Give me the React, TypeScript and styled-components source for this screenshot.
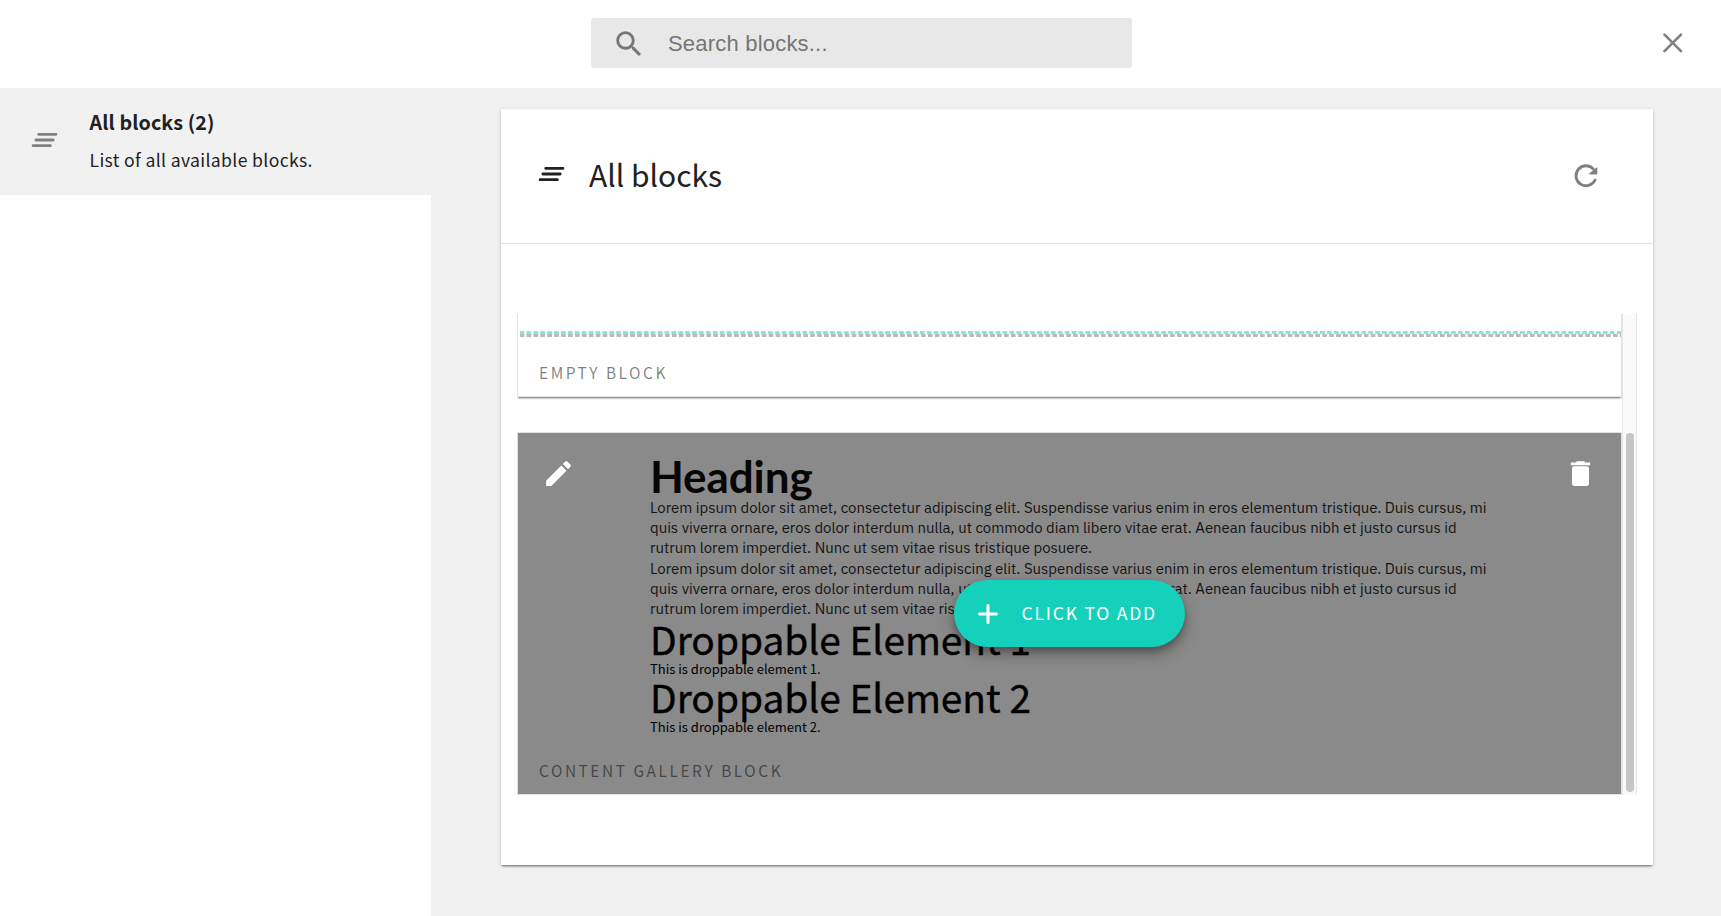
import React from "react";
import styled, { createGlobalStyle } from "styled-components";

const Global = createGlobalStyle`
  *, *::before, *::after { box-sizing: border-box; }
  body {
    margin: 0;
    background: #f1f1f1;
    color: #212121;
    font-family: "Source Sans Pro", "Noto Sans CJK SC", sans-serif;
  }
`;

const Page = styled.div`
  height: 916px;
  display: flex;
  flex-direction: column;
  overflow: hidden;
`;

const TopBar = styled.header`
  height: 88px;
  flex: none;
  display: grid;
  grid-template-columns: 1fr 541px 1fr;
  align-items: start;
  padding-top: 18px;
  background: #fff;
`;

const SearchBox = styled.label`
  grid-column: 2;
  display: flex;
  align-items: center;
  width: 541px;
  height: 50px;
  margin: 0 -1px 0 1px;
  padding: 1px 0 0 21px;
  gap: 22px;
  border-radius: 3px;
  background: #e8e8e8;
  color: #757575;
`;

const SearchInput = styled.input`
  flex: 1;
  padding: 0;
  border: 0;
  outline: 0;
  background: transparent;
  color: #757575;
  font: 22px "Liberation Sans", Arial, sans-serif;
  letter-spacing: 0.2px;
  &::placeholder { color: #757575; opacity: 1; }
`;

const IconButton = styled.button`
  display: flex;
  padding: 0;
  border: 0;
  background: none;
  color: #808080;
`;

const CloseButton = styled(IconButton)`
  justify-self: end;
  margin: 9px 32px 0 0;
`;

const Icon = styled.svg<{ $size?: number }>`
  display: block;
  flex: none;
  width: ${(p) => p.$size ?? 32}px;
  height: ${(p) => p.$size ?? 32}px;
  fill: currentColor;
`;

const Body = styled.div`
  flex: 1;
  min-height: 0;
  display: flex;
`;

const Sidebar = styled.aside`
  width: 431px;
  flex: none;
  background: #fff;
`;

const SidebarItem = styled.div`
  display: flex;
  gap: 29.5px;
  height: 107px;
  padding: 15px 0 0 28px;
  background: #f1f1f1;
`;

const SidebarIcon = styled.span`
  padding-top: 21px;
  color: #808080;
`;

const SidebarTitle = styled.div`
  font-size: 19.7px;
  font-weight: 600;
  line-height: 37px;
  letter-spacing: 0.1px;
  white-space: nowrap;
`;

const SidebarText = styled.div`
  font-size: 17.6px;
  line-height: 39px;
  letter-spacing: 0.35px;
  white-space: nowrap;
`;

const Main = styled.main`
  flex: 1;
  padding: 21px 68px 0 70px;
`;

const Card = styled.section`
  height: 756px;
  display: flex;
  flex-direction: column;
  background: #fff;
  box-shadow: 0 2px 2px -1px rgba(0, 0, 0, 0.5), 0 1px 4px rgba(0, 0, 0, 0.16);
`;

const CardHeader = styled.div`
  height: 135px;
  flex: none;
  display: flex;
  align-items: center;
  justify-content: space-between;
  padding: 0 51px 0 33.5px;
  border-bottom: 1px solid #e4e4e4;
`;

const TitleGroup = styled.div`
  display: flex;
  align-items: center;
  gap: 22.5px;
  padding-bottom: 4px;
`;

const CardTitle = styled.h1`
  margin: 0;
  font-size: 30px;
  font-weight: 400;
  line-height: 48px;
  white-space: nowrap;
`;

const Scroller = styled.div`
  height: 481px;
  margin: 70px 16px 0;
  display: flex;
  overflow: hidden;
`;

const BlockList = styled.div`
  flex: 1;
  display: flex;
  flex-direction: column;
  gap: 35px;
`;

const EmptyBlock = styled.article`
  height: 83px;
  flex: none;
  padding-top: 17px;
  border: solid #e4e4e4;
  border-width: 0 1px 1px;
  box-shadow: 0 2px 2px -1px rgba(0, 0, 0, 0.6);
`;

const Dashes = styled.div<{ $color: string; $period: number }>`
  height: 3px;
  margin-left: 2px;
  background: repeating-linear-gradient(
    90deg,
    ${(p) => p.$color} 0 3.8px,
    transparent 4.8px ${(p) => p.$period - 0.8}px,
    ${(p) => p.$color} ${(p) => p.$period}px
  );
`;

const BlockLabel = styled.div`
  font-size: 15.4px;
  line-height: 24px;
  letter-spacing: 2.57px;
  text-transform: uppercase;
  white-space: nowrap;
  color: rgba(0, 0, 0, 0.5);
`;

const EmptyLabel = styled(BlockLabel)`
  margin: 22.5px 0 0 21px;
`;

const GalleryBlock = styled.article`
  position: relative;
  height: 363px;
  flex: none;
  padding: 21px 0 0 132px;
  border: 1px solid #e2e2e2;
  background: #8a8a8a;
  background-clip: padding-box;
  color: #000;
`;

const Heading = styled.h2`
  height: 44px;
  margin: 0;
  font-family: Lato, sans-serif;
  font-size: 44px;
  font-weight: 700;
  line-height: 44px;
  letter-spacing: -0.1px;
  color: #060606;
`;

const Line = styled.div`
  height: 20.2px;
  font-family: "IBM Plex Sans", Roboto, sans-serif;
  font-size: 14.93px;
  line-height: 20.2px;
  white-space: nowrap;
  color: #141414;
`;

const DropArea = styled.div`
  padding-top: 1px;
`;

const DropTitle = styled.div`
  height: 42.7px;
  font-size: 38.85px;
  line-height: 36px;
  white-space: nowrap;
  -webkit-text-stroke: 0.4px #000;
`;

const DropText = styled.div`
  height: 15.3px;
  font-size: 13px;
  line-height: 12.5px;
  white-space: nowrap;
`;

const GalleryLabel = styled(BlockLabel)`
  margin: 22.4px 0 0 -111px;
`;

const Corner = styled(IconButton)<{ $side: "left" | "right" }>`
  position: absolute;
  top: 24px;
  ${(p) => p.$side}: 24px;
  color: #fff;
`;

const AddButton = styled.button`
  position: absolute;
  left: 436px;
  top: 147px;
  width: 231px;
  height: 67px;
  display: flex;
  align-items: center;
  gap: 17.5px;
  padding: 0 0 0 18px;
  border: 0;
  border-radius: 34px;
  background: #15d0ba;
  box-shadow: 0 4px 6px rgba(0, 0, 0, 0.22), 0 7px 16px rgba(0, 0, 0, 0.28);
  color: #fff;
  font: 17.6px "Source Sans Pro", "Noto Sans CJK SC", sans-serif;
  letter-spacing: 1.75px;
  white-space: nowrap;
`;

const AddLabel = styled.span`
  padding-bottom: 2px;
`;

const Track = styled.div`
  width: 15px;
  flex: none;
  padding: 119px 2px 2px 3px;
  border: solid #e6e6e6;
  border-width: 0 1px;
  background: #fafafa;
`;

const Thumb = styled.div`
  width: 8px;
  height: 359px;
  border-radius: 4px;
  background: #c6c6c6;
`;

const ListIcon = () => (
  <Icon viewBox="0 0 24 24">
    <path
      d="M8 7.750h13M5.900 12h13M3.800 16.250h13"
      stroke="currentColor"
      strokeWidth="2.100"
      strokeLinecap="round"
    />
  </Icon>
);

const paragraph = [
  "Lorem ipsum dolor sit amet, consectetur adipiscing elit. Suspendisse varius enim in eros elementum tristique. Duis cursus, mi",
  "quis viverra ornare, eros dolor interdum nulla, ut commodo diam libero vitae erat. Aenean faucibus nibh et justo cursus id",
  "rutrum lorem imperdiet. Nunc ut sem vitae risus tristique posuere.",
];

export default function App() {
  return (
    <Page>
      <Global />
      <TopBar>
        <SearchBox>
          <Icon $size={34} viewBox="0 0 24 24">
            <path d="M15.5 14h-.79l-.28-.27A6.47 6.47 0 0 0 16 9.500 6.500 6.500 0 1 0 9.500 16c1.610 0 3.090-.59 4.230-1.570l.27.280v.790l5 4.990L20.490 19l-4.990-5zm-6 0A4.500 4.500 0 1 1 14 9.500 4.500 4.500 0 0 1 9.500 14z" />
          </Icon>
          <SearchInput placeholder="Search blocks..." />
        </SearchBox>
        <CloseButton aria-label="Close">
          <Icon viewBox="0 0 24 24">
            <path d="M5.600 5.700 18 18.100M18 5.700 5.600 18.100" stroke="currentColor" strokeWidth="2" strokeLinecap="round" />
          </Icon>
        </CloseButton>
      </TopBar>
      <Body>
        <Sidebar>
          <SidebarItem>
            <SidebarIcon><ListIcon /></SidebarIcon>
            <div>
              <SidebarTitle>All blocks (2)</SidebarTitle>
              <SidebarText>List of all available blocks.</SidebarText>
            </div>
          </SidebarItem>
        </Sidebar>
        <Main>
          <Card>
            <CardHeader>
              <TitleGroup>
                <ListIcon />
                <CardTitle>All blocks</CardTitle>
              </TitleGroup>
              <IconButton aria-label="Refresh">
                <Icon viewBox="0 0 24 24">
                  <path d="M20.500 5.300v5a.6.6 0 0 1-.6.6h-4.900a.6.6 0 0 1-.4-1z" />
                  <path d="M18.800 15A7.500 7.500 0 1 1 17.600 6.800" fill="none" stroke="currentColor" strokeWidth="2.100" strokeLinecap="round" />
                </Icon>
              </IconButton>
            </CardHeader>
            <Scroller>
              <BlockList>
                <EmptyBlock>
                  <Dashes $color="#80ead8" $period={6.9} />
                  <Dashes $color="#bababa" $period={6.92} />
                  <EmptyLabel>Empty block</EmptyLabel>
                </EmptyBlock>
                <GalleryBlock>
                  <Heading>Heading</Heading>
                  {[...paragraph, ...paragraph].map((text, i) => (
                    <Line key={i}>{text}</Line>
                  ))}
                  <DropArea>
                    <DropTitle>Droppable Element 1</DropTitle>
                    <DropText>This is droppable element 1.</DropText>
                    <DropTitle>Droppable Element 2</DropTitle>
                    <DropText>This is droppable element 2.</DropText>
                  </DropArea>
                  <GalleryLabel>Content gallery block</GalleryLabel>
                  <Corner $side="left" aria-label="Edit">
                    <Icon $size={33} viewBox="0 0 24 24">
                      <path d="M3 17.250V21h3.750L17.810 9.940l-3.750-3.750zM20.710 7.040a1 1 0 0 0 0-1.410l-2.340-2.340a1 1 0 0 0-1.410 0l-1.830 1.830 3.750 3.750z" />
                    </Icon>
                  </Corner>
                  <Corner $side="right" aria-label="Delete">
                    <Icon $size={33} viewBox="0 0 24 24">
                      <path d="M5.800 8.300a1.500 1.500 0 0 1 1.500-1.500h9.400a1.500 1.500 0 0 1 1.500 1.500v11.200a1.500 1.500 0 0 1-1.500 1.500H7.300a1.500 1.500 0 0 1-1.500-1.500zM5 4h3.300l1.200-.9h5l1.200.9H19v2H5z" />
                    </Icon>
                  </Corner>
                  <AddButton>
                    <Icon viewBox="0 0 24 24">
                      <path d="M12 5.700v12.600M5.700 12h12.600" stroke="currentColor" strokeWidth="2.300" strokeLinecap="round" />
                    </Icon>
                    <AddLabel>CLICK TO ADD</AddLabel>
                  </AddButton>
                </GalleryBlock>
              </BlockList>
              <Track><Thumb /></Track>
            </Scroller>
          </Card>
        </Main>
      </Body>
    </Page>
  );
}
